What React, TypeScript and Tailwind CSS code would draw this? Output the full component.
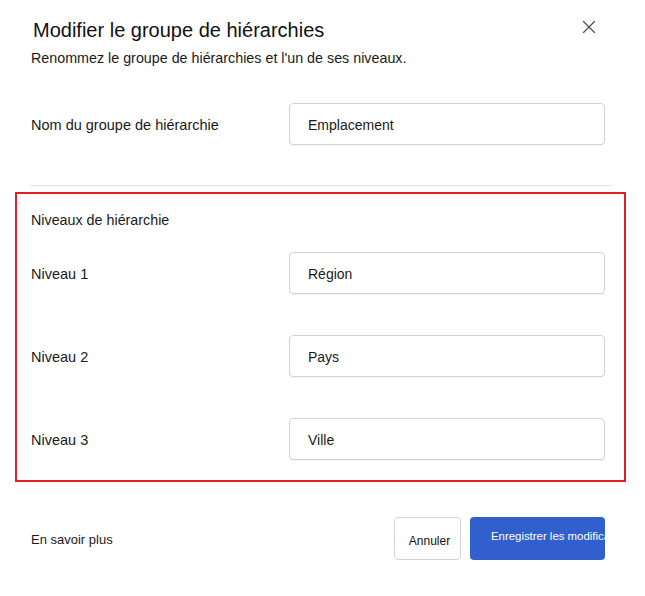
import React from "react";

function Field({ value }: { value: string }) {
  return (
    <div className="w-[316px] h-[42px] border border-[#d3d3d3] rounded-[4px] bg-white flex items-center pl-[18px] pt-[2px] shadow-[0_1px_1px_rgba(0,0,0,0.05)]">
      <span className="text-[14px] leading-[20px] text-[#1a1a1a]">{value}</span>
    </div>
  );
}

function Row({ label, value }: { label: string; value: string }) {
  return (
    <div className="flex items-center h-[42px]">
      <div className="w-[258px] text-[14.5px] leading-[20px] text-[#1a1a1a] pt-[2px]">{label}</div>
      <Field value={value} />
    </div>
  );
}

export default function App() {
  return (
    <div className="w-[645px] h-[596px] bg-white text-[#1a1a1a] font-['Liberation_Sans',Arial,sans-serif] pl-[31px] pr-[33px] pt-[16px] overflow-hidden">
      <div className="flex justify-between items-start">
        <h1 className="ml-[2px] text-[20px] leading-[28px] text-[#111]">Modifier le groupe de hiérarchies</h1>
        <button className="mt-[5px] mr-[17px] w-[12px] h-[12px] flex items-center justify-center" aria-label="Fermer">
          <svg width="12" height="12" viewBox="0 0 12 12" fill="none">
            <path d="M0.5 0.5L11.5 11.5M11.5 0.5L0.5 11.5" stroke="#4a4a4a" strokeWidth="1.2" strokeLinecap="round" />
          </svg>
        </button>
      </div>
      <p className="mt-[4px] text-[14.3px] leading-[20px]">Renommez le groupe de hiérarchies et l'un de ses niveaux.</p>

      <div className="mt-[35px]">
        <Row label="Nom du groupe de hiérarchie" value="Emplacement" />
      </div>

      <div className="mt-[40px] h-px bg-[#e1e1e1]" />

      <div className="mt-[6px] ml-[-16px] mr-[-14px] border-2 border-[#e31e24] pl-[14px] pr-[12px] pt-[16px] pb-[20px]">
        <div className="text-[14.3px] leading-[20px]">Niveaux de hiérarchie</div>
        <div className="mt-[22px] flex flex-col gap-[41px]">
          <Row label="Niveau 1" value="Région" />
          <Row label="Niveau 2" value="Pays" />
          <Row label="Niveau 3" value="Ville" />
        </div>
      </div>

      <div className="mt-[35px] flex items-center justify-between">
        <span className="text-[13px] leading-[18px] pt-[2px]">En savoir plus</span>
        <div className="flex gap-[9px] mr-[7px]">
          <button className="w-[67px] h-[43px] border border-[#d3d3d3] rounded-[4px] bg-white flex items-center justify-center pt-[5px] pl-[4px] text-[12px] text-[#111]">
            Annuler
          </button>
          <button className="w-[135px] h-[43px] rounded-[4px] bg-[#315fcd] text-white text-[11.4px] leading-[16px] flex items-start pt-[11px] pl-[21px] overflow-hidden whitespace-nowrap">
            Enregistrer les modifications
          </button>
        </div>
      </div>
    </div>
  );
}
